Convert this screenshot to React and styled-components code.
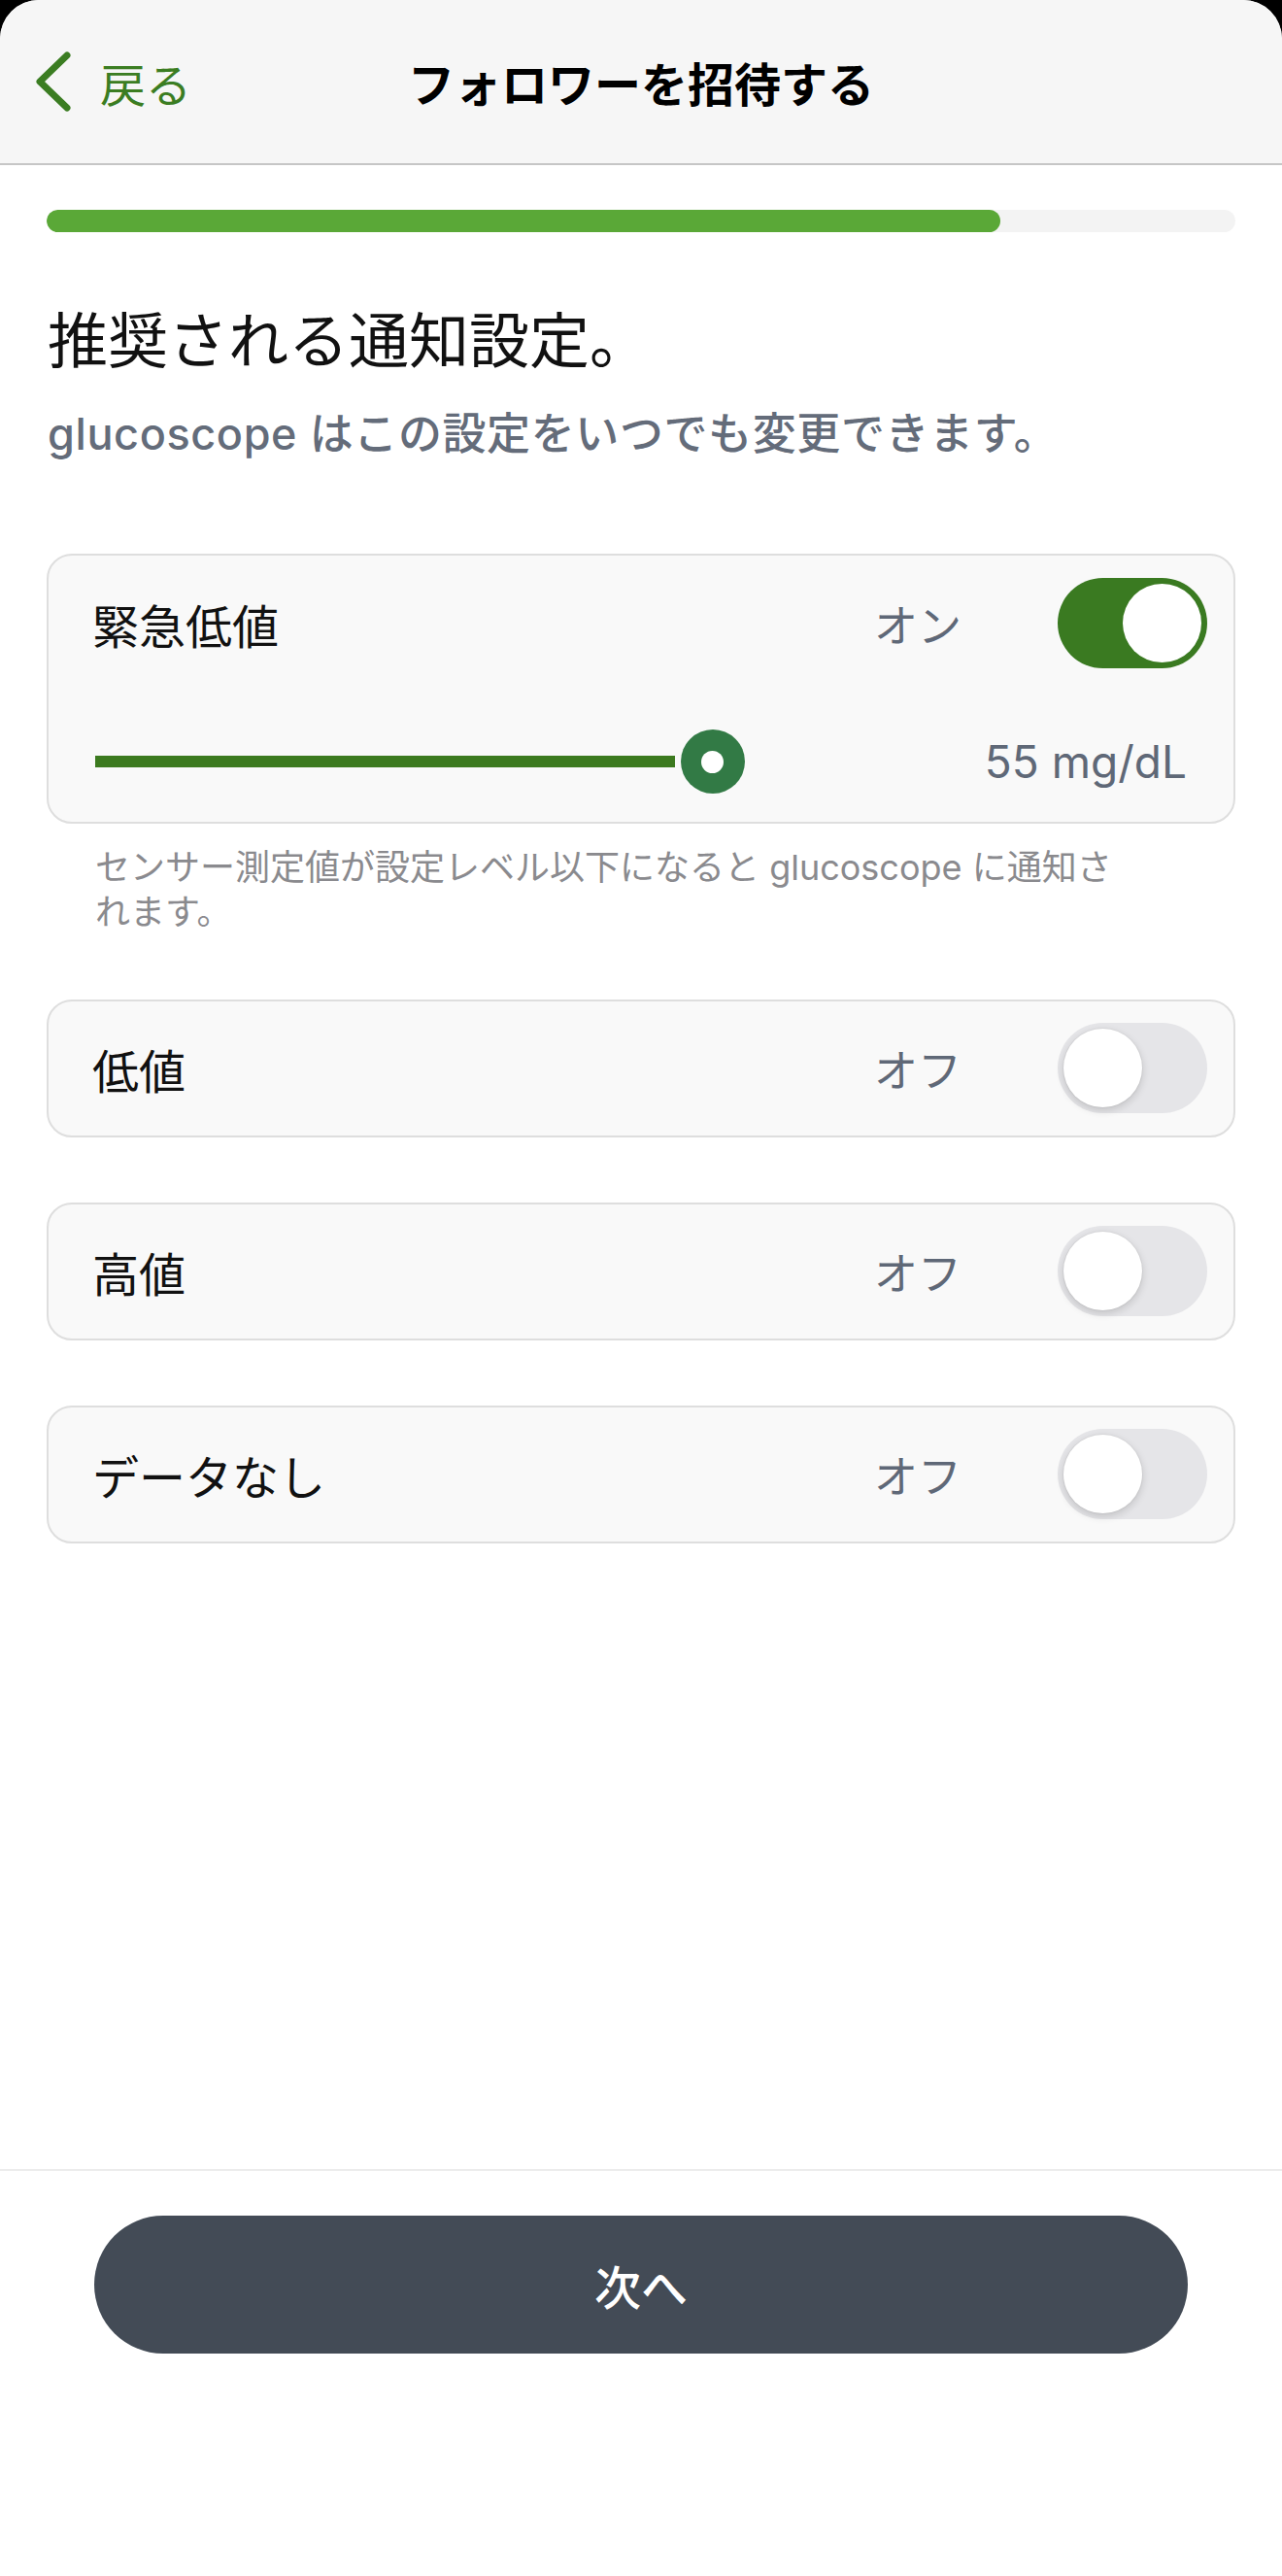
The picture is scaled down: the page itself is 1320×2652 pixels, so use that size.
import React from 'react';
import styled, { createGlobalStyle } from 'styled-components';

const GlobalStyle = createGlobalStyle`
    html, body {
        margin: 0;
        padding: 0;
        background: #000;
    }
    body {
        font-family: Inter, "Noto Sans CJK JP", sans-serif;
        -webkit-font-smoothing: antialiased;
    }
`;

const Sheet = styled.div`
    width: 1320px;
    min-height: 2652px;
    background: #fff;
    border-radius: 40px 40px 0 0;
    overflow: hidden;
    display: flex;
    flex-direction: column;
`;

const Header = styled.header`
    height: 168px;
    background: #f6f6f6;
    border-bottom: 2px solid #c6c6c6;
    display: grid;
    grid-template-columns: 1fr auto 1fr;
    align-items: center;
`;

const BackButton = styled.button`
    justify-self: start;
    display: flex;
    align-items: center;
    gap: 29px;
    margin-left: 36px;
    padding: 0;
    border: none;
    background: none;
    color: #3b7d22;
    font-family: inherit;
    font-size: 47px;
    cursor: pointer;
    svg {
        width: 38px;
        height: 62px;
    }
`;

const Title = styled.h1`
    margin: 0;
    font-size: 48px;
    font-weight: 700;
    color: #000;
`;

const Main = styled.main`
    flex: 1;
    padding: 46px 48px 0;
`;

const Progress = styled.div`
    height: 23px;
    border-radius: 12px;
    background: #f3f3f3;
    overflow: hidden;
    div {
        height: 100%;
        background: #5aa837;
        border-radius: 12px;
    }
`;

const Heading = styled.h2`
    margin: 77px 0 0 1px;
    font-size: 62px;
    line-height: 72px;
    font-weight: 400;
    color: #111;
`;

const Subtitle = styled.p`
    margin: 30px 0 0 1px;
    font-size: 45px;
    line-height: 58px;
    font-weight: 500;
    letter-spacing: 0.6px;
    color: #646c7a;
`;

const Card = styled.section`
    margin-top: ${(p) => p.$top}px;
    background: #f9f9f9;
    border: 2px solid #dedede;
    border-radius: 26px;
`;

const ToggleRow = styled.div`
    display: flex;
    align-items: center;
    padding: ${(p) => (p.$first ? '23px 27px 0 45px' : '22px 27px 23px 45px')};
`;

const Label = styled.span`
    flex: 1;
    font-size: 48px;
    color: #111;
`;

const Status = styled.span`
    width: 90px;
    margin-right: 99px;
    font-size: 45px;
    color: #5f6877;
`;

const Toggle = styled.button`
    width: 154px;
    height: 93px;
    padding: 6px;
    border: none;
    border-radius: 47px;
    background: ${(p) => (p.$on ? '#3a7a21' : '#e5e5e8')};
    display: flex;
    justify-content: ${(p) => (p.$on ? 'flex-end' : 'flex-start')};
    cursor: pointer;
    span {
        width: 81px;
        height: 81px;
        border-radius: 50%;
        background: #fff;
        box-shadow: ${(p) => (p.$on ? 'none' : '0 3px 9px rgba(0, 0, 0, 0.16), 0 0 0 1px rgba(0, 0, 0, 0.04)')};
    }
`;

const SliderRow = styled.div`
    display: flex;
    align-items: center;
    padding: 63px 48px 29px 48px;
`;

const Slider = styled.div`
    flex: 1;
    display: flex;
    align-items: center;
    max-width: 800px;
`;

const SliderFill = styled.div`
    height: 12px;
    background: #3c7a1f;
`;

const SliderThumb = styled.div`
    width: 66px;
    height: 66px;
    margin-left: 6px;
    border-radius: 50%;
    background: #327a45;
    display: flex;
    align-items: center;
    justify-content: center;
    flex-shrink: 0;
    &::after {
        content: '';
        width: 23px;
        height: 23px;
        border-radius: 50%;
        background: #fff;
    }
`;

const SliderValue = styled.span`
    margin-left: auto;
    font-size: 46px;
    color: #5f6877;
`;

const Helper = styled.p`
    margin: 22px 0 0 50px;
    max-width: 1075px;
    font-size: 36px;
    line-height: 46px;
    color: #8a8a8e;
`;

const Footer = styled.footer`
    border-top: 2px solid #ececec;
    padding: 46px 97px 229px;
`;

const NextButton = styled.button`
    width: 100%;
    height: 142px;
    border: none;
    border-radius: 71px;
    background: #434b56;
    color: #fff;
    font-family: inherit;
    font-size: 48px;
    font-weight: 500;
    cursor: pointer;
`;

const alerts = [
    { label: '低値', on: false },
    { label: '高値', on: false },
    { label: 'データなし', on: false },
];

const Switch = ({ on }) => (
    <Toggle $on={on} aria-pressed={on}>
        <span />
    </Toggle>
);

const App = () => {
    const urgentValue = 55;
    const sliderPct = 74.6;
    return (
        <>
            <GlobalStyle />
            <Sheet>
                <Header>
                    <BackButton>
                        <svg viewBox="0 0 38 62" fill="none">
                            <polyline points="33,4 5,31 33,58" stroke="#3b7d22" strokeWidth="7" strokeLinecap="round" strokeLinejoin="round" />
                        </svg>
                        戻る
                    </BackButton>
                    <Title>フォロワーを招待する</Title>
                    <div />
                </Header>
                <Main>
                    <Progress>
                        <div style={{ width: '80.2%' }} />
                    </Progress>
                    <Heading>推奨される通知設定。</Heading>
                    <Subtitle>glucoscope はこの設定をいつでも変更できます。</Subtitle>

                    <Card $top={94}>
                        <ToggleRow $first>
                            <Label>緊急低値</Label>
                            <Status>オン</Status>
                            <Switch on />
                        </ToggleRow>
                        <SliderRow>
                            <Slider>
                                <SliderFill style={{ width: `${sliderPct}%` }} />
                                <SliderThumb />
                            </Slider>
                            <SliderValue>{urgentValue} mg/dL</SliderValue>
                        </SliderRow>
                    </Card>
                    <Helper>センサー測定値が設定レベル以下になると glucoscope に通知されます。</Helper>

                    {alerts.map((a) => (
                        <Card key={a.label} $top={67}>
                            <ToggleRow>
                                <Label>{a.label}</Label>
                                <Status>{a.on ? 'オン' : 'オフ'}</Status>
                                <Switch on={a.on} />
                            </ToggleRow>
                        </Card>
                    ))}
                </Main>
                <Footer>
                    <NextButton>次へ</NextButton>
                </Footer>
            </Sheet>
        </>
    );
};

export default App;
